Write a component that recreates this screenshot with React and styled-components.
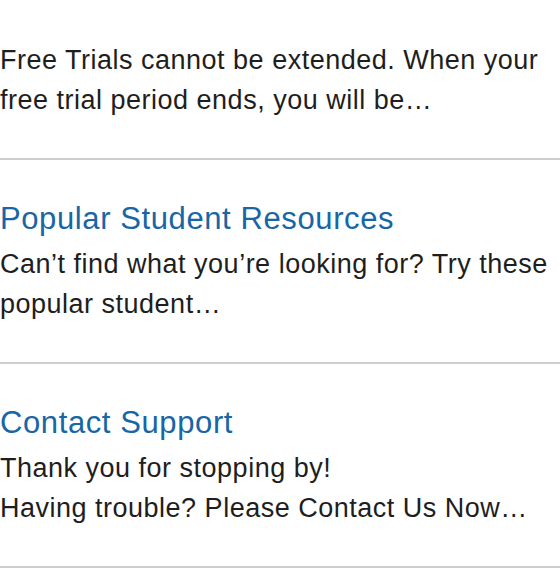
import React from 'react';
import styled, { createGlobalStyle } from 'styled-components';

const GlobalStyle = createGlobalStyle`
  html, body {
    margin: 0;
    padding: 0;
    background: #ffffff;
  }
  body {
    font-family: 'Liberation Sans', Arial, Helvetica, sans-serif;
    -webkit-font-smoothing: antialiased;
  }
`;

const List = styled.div`
  display: flex;
  flex-direction: column;
  width: 560px;
`;

const Item = styled.div`
  display: flex;
  flex-direction: column;
  padding: ${({ first }) => (first ? '40px' : '39px')} 0 38px;
  border-bottom: 2px solid #cdcdcd;
`;

const Title = styled.a`
  display: block;
  margin: 0 0 5px;
  font-size: 31px;
  line-height: 40px;
  letter-spacing: 0.6px;
  color: #1766a5;
  text-decoration: none;
`;

const Summary = styled.p`
  margin: 0;
  font-size: 27px;
  line-height: 40px;
  letter-spacing: 0.5px;
  color: #1e1e1e;
`;

const items = [
  {
    body: ['Free Trials cannot be extended. When your', 'free trial period ends, you will be\u2026'],
  },
  {
    title: 'Popular Student Resources',
    body: ['Can\u2019t find what you\u2019re looking for? Try these', 'popular student\u2026'],
  },
  {
    title: 'Contact Support',
    body: ['Thank you for stopping by!', 'Having trouble? Please Contact Us Now\u2026'],
  },
];

const App = () => {
  return (
    <>
      <GlobalStyle />
      <List>
        {items.map((item, index) => (
          <Item key={index} first={!item.title}>
            {item.title && <Title href="#">{item.title}</Title>}
            <Summary>
              {item.body.map((line, i) => (
                <React.Fragment key={i}>
                  {i > 0 && <br />}
                  {line}
                </React.Fragment>
              ))}
            </Summary>
          </Item>
        ))}
      </List>
    </>
  );
};

export default App;
